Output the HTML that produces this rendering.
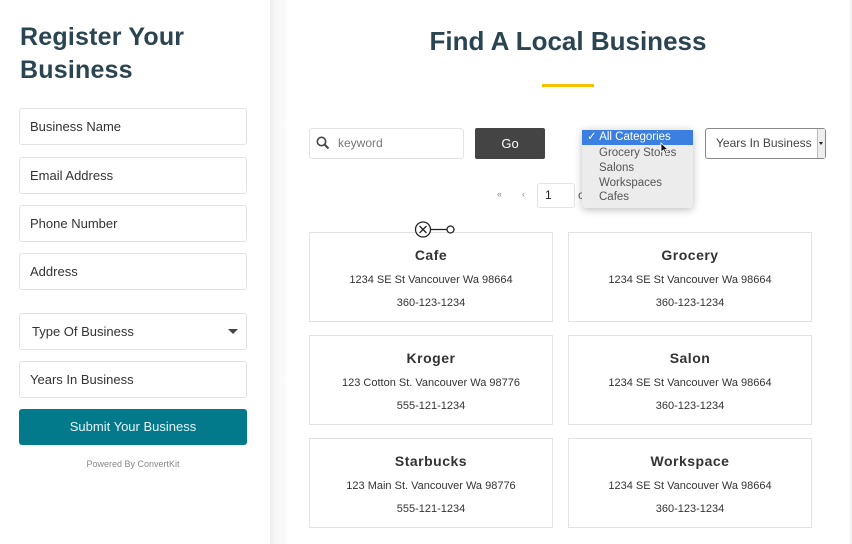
<!DOCTYPE html>
<html><head><style>
*{box-sizing:border-box;margin:0;padding:0}
body{width:852px;height:544px;overflow:hidden;background:#fff;font-family:"Liberation Sans",sans-serif;position:relative;color:#333}
.abs{position:absolute}
.strip{left:270px;top:0;width:16px;height:544px;background:linear-gradient(to right,#ececec,#f7f7f7 30%,#fbfbfb)}
h1{position:absolute;left:20px;top:21px;font-size:25px;line-height:33px;font-weight:bold;color:#2a4452;letter-spacing:0.2px}
.inp{position:absolute;left:19px;width:228px;height:37px;border:1px solid #e3e3e3;border-radius:3px;font-size:13px;color:#333;padding-left:10px;line-height:35px}
.btn{position:absolute;left:19px;top:409px;width:228px;height:36px;background:#037a8c;border-radius:3px;color:#e6f3f5;font-size:13px;text-align:center;line-height:36px}
.pw{position:absolute;left:0;width:266px;top:459px;text-align:center;font-size:9px;color:#888}
.h2{position:absolute;left:285px;width:566px;top:26px;text-align:center;font-size:26px;font-weight:bold;color:#2a4452}
.card{position:absolute;width:244px;height:90px;border:1px solid #e2e2e2;text-align:center}
.card b{display:block;margin-top:14px;font-size:14px;color:#333;letter-spacing:0.5px}
.card p{font-size:11px;color:#333;margin-top:11px}
.card p+p{margin-top:11px}
</style></head><body>
<div class="abs strip"></div>
<div class="abs" style="left:850px;top:0;width:2px;height:544px;background:#f2f2f2"></div>
<h1>Register Your<br>Business</h1>
<div class="inp" style="top:108px">Business Name</div>
<div class="inp" style="top:157px">Email Address</div>
<div class="inp" style="top:205px">Phone Number</div>
<div class="inp" style="top:253px">Address</div>
<div class="inp" style="top:313px;padding-left:12px">Type Of Business<span style="position:absolute;right:8px;top:15px;border-left:5px solid transparent;border-right:5px solid transparent;border-top:5px solid #444"></span></div>
<div class="inp" style="top:361px">Years In Business</div>
<div class="btn">Submit Your Business</div>
<div class="pw">Powered By ConvertKit</div>

<div class="h2">Find A Local Business</div>
<div class="abs" style="left:542px;top:84px;width:52px;height:3px;background:#f2c200"></div>

<div class="abs" style="left:309px;top:128px;width:155px;height:31px;border:1px solid #e3e3e3;border-radius:3px;font-size:12px;color:#777;line-height:29px;padding-left:28px">keyword
<svg class="abs" style="left:6px;top:7px" width="14" height="14" viewBox="0 0 14 14"><circle cx="5.5" cy="5.5" r="4.2" fill="none" stroke="#444" stroke-width="1.6"/><path d="M8.5 8.5L12.5 12.5" stroke="#444" stroke-width="2"/></svg></div>
<div class="abs" style="left:475px;top:128px;width:70px;height:31px;background:#444;border-radius:2px;color:#fff;font-size:13px;text-align:center;line-height:31px">Go</div>

<div class="abs" style="left:705px;top:128px;width:121px;height:31px;border:1px solid #888;border-radius:3px;font-size:12px;color:#444;line-height:29px;padding-left:10px;background:#fff">Years In Business
<div class="abs" style="right:0;top:0;width:8px;height:29px;background:#eee;border-left:1px solid #bbb"><span class="abs" style="left:1px;top:13px;border-left:2.5px solid transparent;border-right:2.5px solid transparent;border-top:3px solid #222"></span></div></div>

<div class="abs" style="left:497px;top:189px;font-size:9px;color:#888">«</div>
<div class="abs" style="left:522px;top:189px;font-size:9px;color:#888">‹</div>
<div class="abs" style="left:537px;top:183px;width:38px;height:25px;border:1px solid #e3e3e3;border-radius:3px;font-size:12px;line-height:23px;padding-left:7px;color:#222">1</div>
<div class="abs" style="left:578px;top:188px;font-size:12px;color:#555">o</div>

<div class="abs" style="left:582px;top:129px;width:111px;height:79px;background:#ececec;border-radius:4px;box-shadow:0 2px 8px rgba(0,0,0,.25);font-size:11.5px;color:#555">
<div style="background:#3b7fe0;color:#fff;height:15px;line-height:15px;margin-top:1px;padding-left:5px;font-size:11.5px">✓ All Categories</div>
<div style="padding-left:17px;line-height:14.8px;margin-top:1px">Grocery Stores<br>Salons<br>Workspaces<br>Cafes</div>
<svg class="abs" style="left:78px;top:13px" width="9" height="13" viewBox="0 0 9 13"><path d="M1 1L1 10L3.5 8L5.5 12L7 11.3L5 7.5L8 7.5Z" fill="#111" stroke="#fff" stroke-width=".8"/></svg>
</div>

<div class="card" style="left:309px;top:232px"><b>Cafe</b><p>1234 SE St Vancouver Wa 98664</p><p>360-123-1234</p></div>
<div class="card" style="left:568px;top:232px"><b>Grocery</b><p>1234 SE St Vancouver Wa 98664</p><p>360-123-1234</p></div>
<div class="card" style="left:309px;top:335px"><b>Kroger</b><p>123 Cotton St. Vancouver Wa 98776</p><p>555-121-1234</p></div>
<div class="card" style="left:568px;top:335px"><b>Salon</b><p>1234 SE St Vancouver Wa 98664</p><p>360-123-1234</p></div>
<div class="card" style="left:309px;top:438px"><b>Starbucks</b><p>123 Main St. Vancouver Wa 98776</p><p>555-121-1234</p></div>
<div class="card" style="left:568px;top:438px"><b>Workspace</b><p>1234 SE St Vancouver Wa 98664</p><p>360-123-1234</p></div>

<svg class="abs" style="left:413px;top:220px" width="45" height="19" viewBox="0 0 45 19"><circle cx="10" cy="9.5" r="7.5" fill="#fff" stroke="#222" stroke-width="1.3"/><path d="M6.5 6L13.5 13M13.5 6L6.5 13" stroke="#222" stroke-width="1.3"/><path d="M17.5 9.5H34" stroke="#222" stroke-width="1.2"/><circle cx="37.5" cy="9.5" r="3.5" fill="#fff" stroke="#222" stroke-width="1.3"/></svg>
</body></html>
